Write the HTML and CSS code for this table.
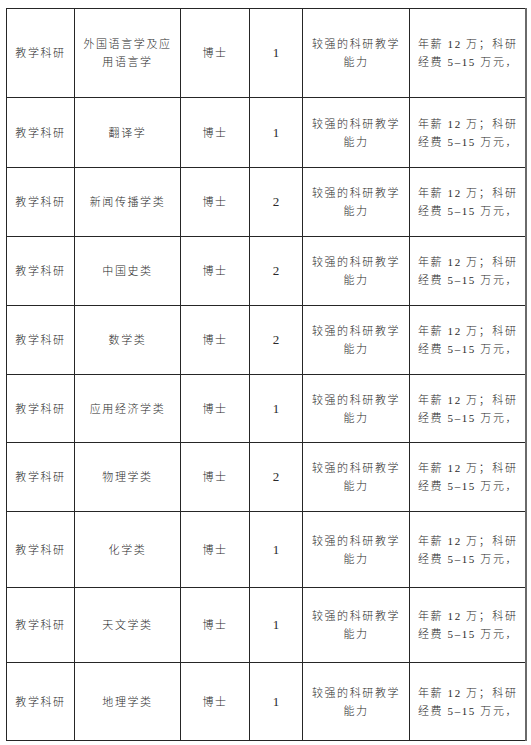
FILE: index.html
```html
<!DOCTYPE html>
<html lang="zh-CN">
<head>
<meta charset="utf-8">
<title>招聘岗位</title>
<link rel="stylesheet" href="styles.css">
</head>
<body>
<div class="page">
<table class="jobs">
<colgroup>
<col class="c1"><col class="c2"><col class="c3"><col class="c4"><col class="c5"><col class="c6">
</colgroup>
<tbody>
<tr class="r89"><td>教学科研</td><td>外国语言学及应<br>用语言学</td><td>博士</td><td class="num">1</td><td>较强的科研教学<br>能力</td><td class="pay"><span class="l1"><span>年薪 12 万；</span><span>科研</span></span><span class="l2">经费 5–15 万元，</span></td></tr>
<tr class="r70"><td>教学科研</td><td>翻译学</td><td>博士</td><td class="num">1</td><td>较强的科研教学<br>能力</td><td class="pay"><span class="l1"><span>年薪 12 万；</span><span>科研</span></span><span class="l2">经费 5–15 万元，</span></td></tr>
<tr class="r69"><td>教学科研</td><td>新闻传播学类</td><td>博士</td><td class="num">2</td><td>较强的科研教学<br>能力</td><td class="pay"><span class="l1"><span>年薪 12 万；</span><span>科研</span></span><span class="l2">经费 5–15 万元，</span></td></tr>
<tr class="r69"><td>教学科研</td><td>中国史类</td><td>博士</td><td class="num">2</td><td>较强的科研教学<br>能力</td><td class="pay"><span class="l1"><span>年薪 12 万；</span><span>科研</span></span><span class="l2">经费 5–15 万元，</span></td></tr>
<tr class="r69"><td>教学科研</td><td>数学类</td><td>博士</td><td class="num">2</td><td>较强的科研教学<br>能力</td><td class="pay"><span class="l1"><span>年薪 12 万；</span><span>科研</span></span><span class="l2">经费 5–15 万元，</span></td></tr>
<tr class="r68"><td>教学科研</td><td>应用经济学类</td><td>博士</td><td class="num">1</td><td>较强的科研教学<br>能力</td><td class="pay"><span class="l1"><span>年薪 12 万；</span><span>科研</span></span><span class="l2">经费 5–15 万元，</span></td></tr>
<tr class="r69"><td>教学科研</td><td>物理学类</td><td>博士</td><td class="num">2</td><td>较强的科研教学<br>能力</td><td class="pay"><span class="l1"><span>年薪 12 万；</span><span>科研</span></span><span class="l2">经费 5–15 万元，</span></td></tr>
<tr class="r76"><td>教学科研</td><td>化学类</td><td>博士</td><td class="num">1</td><td>较强的科研教学<br>能力</td><td class="pay"><span class="l1"><span>年薪 12 万；</span><span>科研</span></span><span class="l2">经费 5–15 万元，</span></td></tr>
<tr class="r75"><td>教学科研</td><td>天文学类</td><td>博士</td><td class="num">1</td><td>较强的科研教学<br>能力</td><td class="pay"><span class="l1"><span>年薪 12 万；</span><span>科研</span></span><span class="l2">经费 5–15 万元，</span></td></tr>
<tr class="r78"><td>教学科研</td><td>地理学类</td><td>博士</td><td class="num">1</td><td>较强的科研教学<br>能力</td><td class="pay"><span class="l1"><span>年薪 12 万；</span><span>科研</span></span><span class="l2">经费 5–15 万元，</span></td></tr>
</tbody>
</table>
</div>
</body>
</html>
```
FILE: styles.css
```css
html, body {
  margin: 0;
  padding: 0;
  background: #ffffff;
}
.page {
  padding: 8px 0 0 6px;
}
.jobs {
  border-collapse: collapse;
  table-layout: fixed;
  width: 519px;
  font-family: "Liberation Serif", "Noto Sans CJK SC", serif;
  font-size: 11px;
  font-weight: 300;
  letter-spacing: 1.6px;
  line-height: 18px;
  color: #2a2a2a;
}
.c1 { width: 68px; }
.c2 { width: 106px; }
.c3 { width: 69px; }
.c4 { width: 53px; }
.c5 { width: 107px; }
.c6 { width: 116px; }
.jobs td {
  border: 1px solid #262626;
  text-align: center;
  vertical-align: middle;
  padding: 0 2px;
}
.jobs td:nth-child(3),
.jobs td:nth-child(6) {
  border-left-color: #555555;
}
.jobs td.num {
  font-size: 13px;
  letter-spacing: 0;
}
.jobs td.pay {
  text-align: left;
  padding: 0 7px 0 8px;
  border-right: 2px solid #6a6a6a;
  letter-spacing: 1.6px;
}
.pay .l1 {
  display: flex;
  justify-content: space-between;
  white-space: nowrap;
}
.pay .l2 {
  display: block;
  white-space: nowrap;
}
.r89 { height: 89px; }
.r70 { height: 70px; }
.r69 { height: 69px; }
.r68 { height: 68px; }
.r76 { height: 76px; }
.r75 { height: 75px; }
.r78 { height: 78px; }
```
